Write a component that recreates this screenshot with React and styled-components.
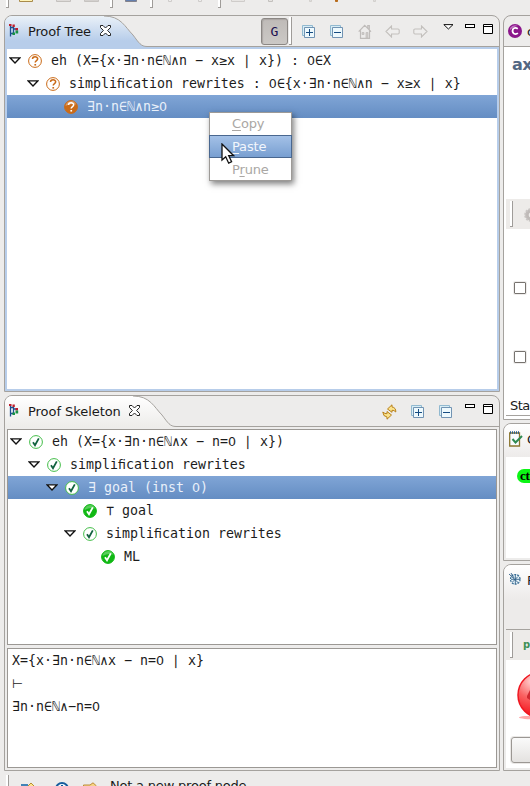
import React from "react";
import styled, { createGlobalStyle, css } from "styled-components";

const GlobalStyle = createGlobalStyle`
  * { box-sizing: border-box; }
  html, body { margin: 0; overflow: hidden; background: #edeceb; }
  svg { display: block; flex: none; }
`;

const edge = "#a5a29e";

const Window = styled.div`
  width: 530px;
  height: 786px;
  overflow: hidden;
  display: flex;
  flex-direction: column;
  background: #edeceb;
  color: #1a1a1a;
  font: 13px/15px "DejaVu Sans", sans-serif;
`;
const TopToolbar = styled.div`
  flex: none;
  height: 15px;
  display: flex;
  overflow: hidden;
`;
const Slot = styled.div`
  flex: none;
  margin-left: ${(p) => p.$gap}px;
`;
const Separator = styled.div`
  flex: none;
  width: 3px;
  height: ${(p) => p.$h}px;
  background: #fff;
  border-right: 1px solid #9f9c99;
  border-bottom: 1px solid #9f9c99;
`;
const Workbench = styled.main`
  flex: none;
  height: 756px;
  display: flex;
  gap: 3px;
  padding-left: 4px;
`;
const Column = styled.div`
  flex: none;
  width: ${(p) => p.$w}px;
  display: flex;
  flex-direction: column;
  gap: 3px;
`;
const Panel = styled.section`
  flex: none;
  height: ${(p) => p.$h}px;
  display: flex;
  flex-direction: column;
  border: 1px solid ${edge};
  border-radius: 8px 8px 0 0;
  overflow: hidden;
  background: #edeceb;
`;
const Header = styled.header`
  flex: none;
  position: relative;
  height: ${(p) => p.$h || 31}px;
  display: flex;
  align-items: flex-start;
  ${(p) => p.$plain && css`background: ${p.$plain};`}
`;
const TabShape = styled.svg`
  position: absolute;
  left: 0;
  top: 0;
`;
const TabLabel = styled.div`
  position: relative;
  height: 29px;
  display: flex;
  align-items: center;
  padding-left: 4px;
`;
const Title = styled.span`
  width: ${(p) => p.$w}px;
  margin: 1px 8px 0 9px;
  letter-spacing: ${(p) => p.$ls}px;
  white-space: nowrap;
`;
const Tools = styled.div`
  position: relative;
  margin-left: auto;
  display: flex;
  padding-right: 6px;
`;
const Tool = styled.div`
  width: ${(p) => p.$w || 14}px;
  margin: ${(p) => p.$top || 8}px 0 0 ${(p) => (p.$gap === undefined ? 14 : p.$gap)}px;
`;
const GoalButton = styled.button`
  width: 27px;
  height: 27px;
  margin-top: 2px;
  padding: 0;
  border: 1px solid #8b8784;
  border-radius: 3px;
  background: linear-gradient(#bfbbb8, #cbc8c5);
  box-shadow: inset 1px 1px 1px #aaa6a3;
  color: #1a1050;
  font: 13px/24px "DejaVu Sans Mono", monospace;
`;
const Body = styled.div`
  flex: 1;
  min-height: 0;
  display: flex;
  flex-direction: column;
  gap: 3px;
  padding: 2px;
  background: ${(p) => (p.$active ? "#b7cdea" : "#edeceb")};
`;
const Tree = styled.div`
  height: ${(p) => p.$h}px;
  background: #fff;
  ${(p) => p.$framed && css`border: 1px solid #9b9894;`}
`;
const TreeRow = styled.div`
  height: 23px;
  display: flex;
  align-items: center;
  padding-left: ${(p) => 2 + p.$depth * 18}px;
  font: 13.29px/23px "DejaVu Sans Mono", monospace;
  white-space: pre;
  color: ${(p) => (p.$selected ? "#e9f0fa" : "#1c1c1c")};
  ${(p) => p.$selected && css`background: linear-gradient(#80a5d6, #648dc3);`}
`;
const TwistieSlot = styled.div`width: 19px;`;
const NodeLabel = styled.span`margin-left: 9px;`;
const Proportional = styled.span`
  font-family: "DejaVu Sans", sans-serif;
  font-size: 12.6px;
`;
const Sequent = styled.div`
  height: 120px;
  padding-left: 4px;
  border: 1px solid #9b9894;
  background: #fff;
  font: 13.29px/23px "DejaVu Sans Mono", monospace;
  white-space: pre;
`;
const SequentLine = styled.div`
  height: 23px;
`;
const SideBody = styled.div`
  flex: 1;
  display: flex;
  flex-direction: column;
  margin: 0 0 2px 2px;
  background: #fff;
`;
const TopContent = styled.div`
  flex: 1;
  display: flex;
  flex-direction: column;
  border-top: 1px solid ${edge};
  background: #fff;
`;
const IndentedContent = styled.div`
  margin-left: 2px;
`;
const Axiom = styled.div`
  height: 152px;
  padding: 8px 0 0 8px;
  color: #536783;
  font: bold 16px/20px "DejaVu Sans", sans-serif;
  letter-spacing: -0.6px;
`;
const SideBar = styled.div`
  flex: none;
  height: 30px;
  display: flex;
  padding: 2px 0 0 4px;
  background: #edebe9;
`;
const ControlBar = styled(SideBar)`
  height: 31px;
  margin-left: 2px;
  border-top: 1px solid ${edge};
`;
const Check = styled.div`
  flex: none;
  width: 12px;
  height: 12px;
  margin: ${(p) => p.$top}px 0 0 8px;
  border: 1px solid #77736f;
  border-radius: 1px;
  box-shadow: 0 0 0 1px #eeeceb;
`;
const State = styled.div`
  margin-top: 35px;
  padding-left: 4px;
  height: 18px;
  letter-spacing: -0.5px;
  border-bottom: 1px solid ${edge};
`;
const SideTitle = styled.span`
  margin: 8px 0 0 ${(p) => p.$gap}px;
`;
const SideIcon = styled.div`margin: ${(p) => p.$m};`;
const GreenBadge = styled.div`
  width: 24px;
  height: 14px;
  margin: 12px 0 0 11px;
  padding-left: 3px;
  border-radius: 7px;
  background: #0cf515;
  color: #000;
  font: bold 13px/13px "Liberation Serif", serif;
  letter-spacing: -0.2px;
`;
const GreenP = styled.span`
  margin: 5px 0 0 10px;
  color: #3e9055;
  font: bold 10px/15px "DejaVu Sans", sans-serif;
`;
const SideButton = styled.button`
  width: 70px;
  height: 26px;
  margin: 17px 0 0 5px;
  border: 1px solid #9b9793;
  border-radius: 3px;
  background: linear-gradient(#fafafa, #e4e2e0);
  box-shadow: 0 0 0 1px #eae8e6;
`;
const StatusBar = styled.footer`
  height: 15px;
  display: flex;
  overflow: hidden;
`;
const StatusText = styled.span`
  margin: 7px 0 0 13px;
  letter-spacing: -0.2px;
  white-space: nowrap;
`;
const Menu = styled.div`
  position: absolute;
  left: 209px;
  top: 112px;
  width: 83px;
  height: 69px;
  border: 1px solid #9d9a97;
  background: #fff;
  box-shadow: 2px 3px 6px rgba(0, 0, 0, 0.5);
  font: 13px/22px "DejaVu Sans", sans-serif;
  letter-spacing: -0.15px;
`;
const MenuItem = styled.div`
  height: 22px;
  padding-left: 22px;
  color: #aaa7a4;
  &:last-child { line-height: 24px; }
  ${(p) =>
    p.$active &&
    css`
      height: 23px;
      margin: 0 -1px;
      border: 1px solid #49678f;
      background: linear-gradient(#a4c1e7, #789fd1);
      color: #f2f6fc;
      line-height: 21px;
    `}
`;
const Mnemonic = styled.span`
  text-decoration: underline;
  text-underline-offset: 2px;
  text-decoration-thickness: 1px;
`;
const Pointer = styled.svg`
  position: absolute;
  left: 221px;
  top: 143px;
`;

function Formula({ text }) {
  return text
    .split(/(0|fi|⊢)/)
    .map((t, i) => (i % 2 ? <Proportional key={i}>{t}</Proportional> : t));
}

const Twistie = () => (
  <svg width="12" height="7" viewBox="0 0 12 7">
    <path d="M1 .8H11L6 6Z" fill="#fff" stroke="#111" strokeWidth="1.3" />
  </svg>
);

function StatusIcon({ kind }) {
  const solid = kind === "open" || kind === "closed";
  const query = kind === "open" || kind === "pending";
  const color = query ? "#ca6b18" : solid ? "#10b814" : "#43bd48";
  return (
    <svg width="14" height="14" viewBox="0 0 14 14">
      <circle cx="7" cy="7" r="6.4" fill={solid ? color : "#fff"} stroke={color} strokeWidth="1" />
      {solid && <path d="M1.5 6A5.6 5.6 0 0 1 12.2 4.5Q7 3 1.5 6Z" fill="#fff" opacity=".3" />}
      {query ? (
        <g>
          <path d="M4.5 5C4.5 2 9.7 2.1 9.7 4.8C9.7 6.7 7.2 6.5 7.2 8.6" fill="none" stroke={solid ? "#fff" : color} strokeWidth="1.5" />
          <rect x="6.4" y="10" width="1.7" height="1.6" fill={solid ? "#fff" : color} />
        </g>
      ) : (
        <path d="M4 7.2L6 10.2L9.8 3.4" fill="none" stroke={solid ? "#fff" : "#12623f"} strokeWidth="1.8" />
      )}
    </svg>
  );
}

const ProofIcon = () => (
  <svg width="10" height="13" viewBox="0 0 10 13">
    <path d="M1.5 1V12.5M1.5 3.5H4.5V9.5H1.5M4.5 5H7" fill="none" stroke="#1c4f91" strokeWidth="1.3" />
    <path d="M0 0H2.5V2H0ZM3.5 .5H5.8V3H3.5ZM6.5 4H9V6.5H6.5Z" fill="#c01e2b" />
    <path d="M6.5 6.5H9.2V9.5H6.5ZM3.5 8.5H6V11H3.5Z" fill="#179344" />
  </svg>
);

const CloseIcon = () => (
  <svg width="11" height="11" viewBox="0 0 11 11">
    <path d="M.5.5H3L5.5 3L8 .5H10.5V2.5L7.6 5.5L10.5 8.5V10.5H8L5.5 8L3 10.5H.5V8.5L3.4 5.5L.5 2.5Z" fill="#fff" stroke="#222" />
  </svg>
);

const FoldIcon = ({ plus }) => (
  <svg width="14" height="14" viewBox="0 0 14 14">
    <path d="M.5.5H10.5V10.5H.5Z" fill="#d8edf5" stroke="#91b9d0" />
    <path d="M2.5 2.5H12.5V12.5H2.5Z" fill="#eef9fd" stroke="#7193b3" />
    <path d={plus ? "M4 7.5H11M7.5 4V11" : "M4 7.5H11"} stroke="#164c82" />
  </svg>
);

const HomeIcon = () => (
  <svg width="14" height="15" viewBox="0 0 14 15">
    <path d="M.7 7.7L6.7 1.3L13 7.7M2.5 6.5V14.3H11.5V6.5M9.8 4V1.5H11.3V5.5" fill="none" stroke="#bfbcba" strokeWidth="1.2" />
    <path d="M4 8.5H6V10.5H4ZM8 8.5H10V14H8Z" fill="#d0cdca" stroke="#bfbcba" strokeWidth=".7" />
  </svg>
);

const ArrowIcon = ({ right }) => (
  <svg width="15" height="13" viewBox="0 0 15 13">
    <path d={right ? "M14 6.5L8.5 1V4H2Q.8 4 .8 5.2V7.8Q.8 9 2 9H8.5V12Z" : "M1 6.5L6.5 1V4H13Q14.2 4 14.2 5.2V7.8Q14.2 9 13 9H6.5V12Z"} fill="#efeeed" stroke="#c3c0bd" strokeWidth="1.1" />
  </svg>
);

const ViewMenuIcon = () => (
  <svg width="11" height="6" viewBox="0 0 11 6"><path d="M.8.6H10L5.4 5Z" fill="#fff" stroke="#111" /></svg>
);
const MinimizeIcon = () => (
  <svg width="10" height="4" viewBox="0 0 10 4"><rect x=".5" y=".5" width="9" height="3" fill="#fff" stroke="#000" /></svg>
);
const MaximizeIcon = () => (
  <svg width="10" height="10" viewBox="0 0 10 10"><path d="M.5.5H9.5V9.5H.5ZM0 2.5H10" fill="#fff" stroke="#000" /></svg>
);
const SyncIcon = () => (
  <svg width="15" height="16" viewBox="0 0 15 16">
    <path d="M5.5 5L10 .8V3Q14 3.5 13.8 8Q12 6 10 6.3V8.3Z" fill="#fae28c" stroke="#b8811c" />
    <path d="M9.5 11L5 15.2V13Q1 12.5 .8 8Q3 10 5 9.7V7.5Z" fill="#fae28c" stroke="#b8811c" />
  </svg>
);

function Tab({ label, width, spacing, end, active }) {
  const s = end - 43;
  const curve = `C${s + 17} 0 ${s + 21} 11 ${s + 29} 19C${s + 35} 27 ${s + 37} 30.5 ${end} 30.5`;
  const id = active ? "activeTab" : "idleTab";
  return (
    <>
      <TabShape width="494" height="31" viewBox="0 0 494 31">
        <defs>
          <linearGradient id={id} x2="0" y2="1">
            <stop offset="0" stopColor={active ? "#eaf1f8" : "#ffffff"} />
            <stop offset={active ? ".8" : "1"} stopColor={active ? "#b7cdea" : "#edecea"} />
          </linearGradient>
        </defs>
        <path d={`M0 0H${s}${curve}V31H0Z`} fill={`url(#${id})`} />
        <path d={`M${s} 0${curve}H494`} fill="none" stroke={edge} />
      </TabShape>
      <TabLabel>
        <ProofIcon />
        <Title $w={width} $ls={spacing}>{label}</Title>
        <CloseIcon />
      </TabLabel>
    </>
  );
}

function Node({ depth, kind, label, leaf, selected }) {
  return (
    <TreeRow $depth={depth} $selected={selected}>
      <TwistieSlot>{!leaf && <Twistie />}</TwistieSlot>
      <StatusIcon kind={kind} />
      <NodeLabel><Formula text={label} /></NodeLabel>
    </TreeRow>
  );
}

function ProofTree() {
  return (
    <Panel $h={377}>
      <Header>
        <Tab label="Proof Tree" width={64} spacing={-0.15} end={142} active />
        <Tools>
          <GoalButton>G</GoalButton>
          <Tool $gap={1} $top={1} $w={3}><Separator $h={28} /></Tool>
          <Tool $gap={10} $top={9}><FoldIcon plus /></Tool>
          <Tool $top={9}><FoldIcon /></Tool>
          <Tool><HomeIcon /></Tool>
          <Tool $gap={13} $top={9} $w={15}><ArrowIcon /></Tool>
          <Tool $gap={13} $top={9} $w={15}><ArrowIcon right /></Tool>
          <Tool $gap={15} $w={11}><ViewMenuIcon /></Tool>
          <Tool $gap={11} $w={10}><MinimizeIcon /></Tool>
          <Tool $gap={8} $w={10}><MaximizeIcon /></Tool>
        </Tools>
      </Header>
      <Body $active>
        <Tree $h={340}>
          <Node depth={0} kind="pending" label="eh (X={x·∃n·n∈ℕ∧n − x≥x ∣ x}) : 0∈X" />
          <Node depth={1} kind="pending" label="simplification rewrites : 0∈{x·∃n·n∈ℕ∧n − x≥x ∣ x}" />
          <Node depth={2} kind="open" label="∃n·n∈ℕ∧n≥0" leaf selected />
        </Tree>
      </Body>
    </Panel>
  );
}

function ProofSkeleton() {
  return (
    <Panel $h={376}>
      <Header>
        <Tab label="Proof Skeleton" width={93} spacing={-0.05} end={171} />
        <Tools>
          <Tool $w={15}><SyncIcon /></Tool>
          <Tool $top={9}><FoldIcon plus /></Tool>
          <Tool $top={9}><FoldIcon /></Tool>
          <Tool $gap={12} $w={10}><MinimizeIcon /></Tool>
          <Tool $gap={8} $w={10}><MaximizeIcon /></Tool>
        </Tools>
      </Header>
      <Body>
        <Tree $h={216} $framed>
          <Node depth={0} kind="done" label="eh (X={x·∃n·n∈ℕ∧x − n=0 ∣ x})" />
          <Node depth={1} kind="done" label="simplification rewrites" />
          <Node depth={2} kind="done" label="∃ goal (inst 0)" selected />
          <Node depth={3} kind="closed" label="⊤ goal" leaf />
          <Node depth={3} kind="done" label="simplification rewrites" />
          <Node depth={4} kind="closed" label="ML" leaf />
        </Tree>
        <Sequent>
          <SequentLine><Formula text="X={x·∃n·n∈ℕ∧x − n=0 ∣ x}" /></SequentLine>
          <SequentLine><Formula text="⊢" /></SequentLine>
          <SequentLine><Formula text="∃n·n∈ℕ∧−n=0" /></SequentLine>
        </Sequent>
      </Body>
    </Panel>
  );
}

function SidePanels() {
  return (
    <Column $w={60}>
      <Panel $h={405}>
        <Header $h={30}>
          <SideIcon $m="8px 0 0 4px">
            <svg width="14" height="14" viewBox="0 0 14 14">
              <circle cx="7" cy="7" r="7" fill="#8b168b" />
              <path d="M2 4Q5 0 10 2Q6 2 2 6Z" fill="#d59ad5" opacity=".7" />
              <path d="M9.8 4.8Q6.8 2.7 5 5.1Q3.7 7.6 5.8 9.6Q8 10.8 9.9 9.2" fill="none" stroke="#fff" strokeWidth="1.7" />
            </svg>
          </SideIcon>
          <SideTitle $gap={5}>c</SideTitle>
        </Header>
        <TopContent>
          <Axiom>ax</Axiom>
          <IndentedContent>
            <SideBar>
              <Separator $h={26} />
              <SideIcon $m="7px 0 0 11px">
                <svg width="14" height="14" viewBox="0 0 14 14">
                  <circle cx="7" cy="7" r="5.8" fill="#bfbab8" stroke="#c8c4c2" strokeWidth="2" strokeDasharray="2 1" />
                  <circle cx="7" cy="7" r="2.3" fill="#edebe9" />
                </svg>
              </SideIcon>
            </SideBar>
            <Check $top={53} />
            <Check $top={57} />
            <State>Sta</State>
          </IndentedContent>
        </TopContent>
      </Panel>
      <Panel $h={138}>
        <Header $h={33} $plain="linear-gradient(#fff, #edebea)">
          <SideIcon $m="7px 0 0 5px">
            <svg width="14" height="16" viewBox="0 0 14 16">
              <path d="M.7 2H10.5V15H.7Z" fill="#f8fcff" stroke="#8b762f" strokeWidth="1.3" />
              <path d="M1 1.5H11" stroke="#275e8e" strokeWidth="2.5" strokeDasharray="1 1" />
              <path d="M3.5 8L6.5 11.5L13 5" fill="none" stroke="#2f8a51" strokeWidth="2" />
            </svg>
          </SideIcon>
          <SideTitle $gap={4}>G</SideTitle>
        </Header>
        <SideBody><GreenBadge>ct</GreenBadge></SideBody>
      </Panel>
      <Panel $h={207}>
        <Header $h={64} $plain="linear-gradient(#fff, #edebea 34px)">
          <SideIcon $m="8px 0 0 5px">
            <svg width="12" height="12" viewBox="0 0 12 12">
              <circle cx="6.3" cy="6.3" r="4.8" fill="#eaf6fb" stroke="#366c94" strokeWidth="1.2" strokeDasharray="2 1" />
              <path d="M0 1L9 9.5M2 0L5 5M9 3.5L3.5 9M6.3 2V11M2 6.3H11" stroke="#315f88" strokeWidth=".9" />
            </svg>
          </SideIcon>
          <SideTitle $gap={6}>P</SideTitle>
        </Header>
        <ControlBar>
          <Separator $h={26} />
          <GreenP>p</GreenP>
        </ControlBar>
        <SideBody>
          <SideIcon $m="12px 0 0 11px">
            <svg width="48" height="48" viewBox="0 0 48 48">
              <defs>
                <radialGradient id="ball" cx=".3" cy=".2" r=".8">
                  <stop stopColor="#ffd2d2" /><stop offset=".45" stopColor="#fa6262" /><stop offset="1" stopColor="#f30912" />
                </radialGradient>
              </defs>
              <ellipse cx="22" cy="45.5" rx="20" ry="2" fill="#ffaaaa" />
              <circle cx="24" cy="23" r="23" fill="url(#ball)" stroke="#ef1620" strokeWidth="1.5" />
              <path d="M10 24L13 18V28L10 26Z" fill="#cf2930" />
            </svg>
          </SideIcon>
          <SideButton />
        </SideBody>
      </Panel>
    </Column>
  );
}

const CutIcon = ({ w, fill, stroke }) => (
  <svg width={w} height="3" viewBox={`0 0 ${w} 3`}>
    <path d={`M.5 0V1.5H${w - 0.5}V0`} fill={fill} stroke={stroke} />
  </svg>
);

export default function App() {
  return (
    <Window>
      <GlobalStyle />
      <TopToolbar>
        <Slot $gap={6}><Separator $h={8} /></Slot>
        <Slot $gap={10}><CutIcon w={14} fill="#fff4b8" stroke="#a98b4a" /></Slot>
        <Slot $gap={23}><CutIcon w={15} fill="#dedbd9" stroke="#c4c1be" /></Slot>
        <Slot $gap={13}><CutIcon w={15} fill="#d3d0ce" stroke="#c6c3c0" /></Slot>
        <Slot $gap={11}><Separator $h={8} /></Slot>
        <Slot $gap={12}><CutIcon w={12} fill="#647fae" stroke="#84838c" /></Slot>
        <Slot $gap={13}><Separator $h={8} /></Slot>
        <Slot $gap={15}><CutIcon w={4} fill="#eee" stroke="#cfccca" /></Slot>
        <Slot $gap={26}><CutIcon w={4} fill="#eee" stroke="#cfccca" /></Slot>
        <Slot $gap={16}><Separator $h={8} /></Slot>
        <Slot $gap={10}><CutIcon w={14} fill="#e7e5e3" stroke="#cfccca" /></Slot>
        <Slot $gap={23}><CutIcon w={5} fill="#e5e3e1" stroke="#c3c0bd" /></Slot>
        <Slot $gap={36}><CutIcon w={3} fill="#ddd" stroke="#d3d0cd" /></Slot>
        <Slot $gap={23}><CutIcon w={3} fill="#b76b1b" stroke="#b76b1b" /></Slot>
        <Slot $gap={35}><CutIcon w={3} fill="#ddd" stroke="#d3d0cd" /></Slot>
      </TopToolbar>
      <Workbench>
        <Column $w={496}>
          <ProofTree />
          <ProofSkeleton />
        </Column>
        <SidePanels />
      </Workbench>
      <StatusBar>
        <SideIcon $m="4px 0 0 6px"><Separator $h={24} /></SideIcon>
        <SideIcon $m="11px 0 0 12px">
          <svg width="14" height="8" viewBox="0 0 14 8"><path d="M0 2H7V8H0Z" fill="#4183b7" /><path d="M6 5L10 1L14 5V8H6Z" fill="#ffe68f" stroke="#b78f31" /></svg>
        </SideIcon>
        <SideIcon $m="11px 0 0 20px">
          <svg width="14" height="14" viewBox="0 0 14 14"><circle cx="7" cy="7" r="6" fill="#f1faff" stroke="#175d9d" strokeWidth="2" /><path d="M7 3V8" stroke="#175d9d" strokeWidth="2" /></svg>
        </SideIcon>
        <SideIcon $m="11px 0 0 14px">
          <svg width="14" height="9" viewBox="0 0 14 9"><path d="M.5 3H7L10 .8L13.5 4V9H.5Z" fill="#f7d486" stroke="#bd8b36" /></svg>
        </SideIcon>
        <StatusText>Not a new proof node</StatusText>
      </StatusBar>
      <Menu>
        <MenuItem><Mnemonic>C</Mnemonic>opy</MenuItem>
        <MenuItem $active><Mnemonic>P</Mnemonic>aste</MenuItem>
        <MenuItem>P<Mnemonic>r</Mnemonic>une</MenuItem>
      </Menu>
      <Pointer width="14" height="22" viewBox="0 0 14 22">
        <path d="M1 1V17L4.7 13.7L7.7 20.2L10.6 18.8L7.7 12.7H12.7Z" fill="#fff" stroke="#111" strokeWidth="1.3" />
      </Pointer>
    </Window>
  );
}
